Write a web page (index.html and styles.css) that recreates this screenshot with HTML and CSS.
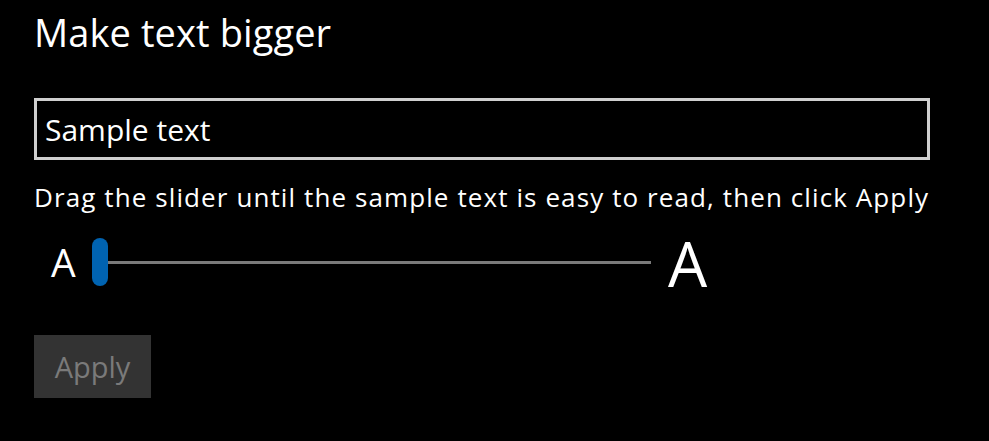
FILE: index.html
```html
<!DOCTYPE html>
<html lang="en">
<head>
<meta charset="utf-8">
<title>Make text bigger</title>
<link rel="stylesheet" href="styles.css">
</head>
<body>
<main class="page">
  <h1 class="title">Make text bigger</h1>
  <div class="sample-box">Sample text</div>
  <p class="hint">Drag the slider until the sample text is easy to read, then click Apply</p>
  <div class="slider-row">
    <span class="a-small">A</span>
    <div class="slider">
      <div class="thumb"></div>
      <div class="track"></div>
    </div>
    <span class="a-big">A</span>
  </div>
  <button class="apply" type="button" disabled>Apply</button>
</main>
</body>
</html>
```
FILE: styles.css
```css
html, body {
  margin: 0;
  padding: 0;
  background: #000;
}
body {
  width: 989px;
  height: 441px;
  overflow: hidden;
  font-family: "Open Sans", "Noto Sans", sans-serif;
  color: #fff;
}
.page {
  padding: 12px 0 0 34px;
  display: flex;
  flex-direction: column;
  align-items: flex-start;
}
.title {
  margin: 0;
  font-size: 38px;
  font-weight: 400;
  line-height: 40px;
  letter-spacing: 0.1px;
}
.sample-box {
  margin-top: 46px;
  box-sizing: border-box;
  width: 896px;
  height: 62px;
  border: 3px solid #cfcfcf;
  padding: 2px 0 0 8px;
  font-size: 30px;
  line-height: 54px;
}
.hint {
  margin: 22px 0 0;
  font-size: 26px;
  line-height: 30px;
  letter-spacing: 1.1px;
  white-space: nowrap;
}
.slider-row {
  margin-top: 26px;
  display: flex;
  align-items: flex-start;
  height: 48px;
}
.a-small {
  margin-left: 17px;
  width: 41px;
  font-size: 39px;
  line-height: 48px;
}
.slider {
  display: flex;
  align-items: center;
  width: 559px;
  height: 48px;
}
.thumb {
  width: 16px;
  height: 48px;
  border-radius: 8px;
  background: #0063b1;
}
.track {
  flex: 1;
  height: 3px;
  background: #7a7a7a;
}
.a-big {
  margin-left: 17px;
  font-size: 62px;
  line-height: 48px;
  padding-top: 1px;
}
.apply {
  margin-top: 49px;
  width: 117px;
  height: 63px;
  padding: 0;
  border: none;
  background: #333;
  color: #7a7a7a;
  font-family: inherit;
  font-size: 29px;
  line-height: 63px;
  text-align: center;
}
```
